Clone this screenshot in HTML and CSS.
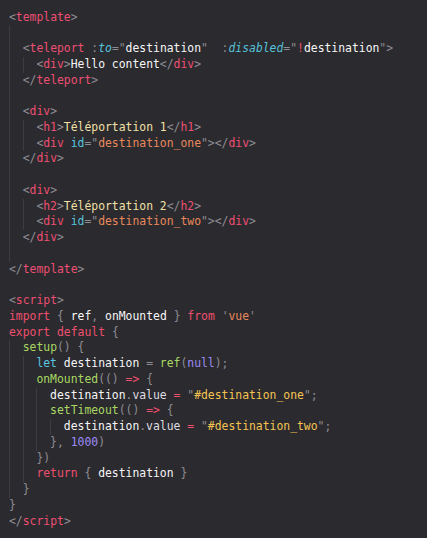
FILE: index.html
```html
<!DOCTYPE html>
<html>
<head>
<meta charset="utf-8">
<link rel="stylesheet" href="styles.css">
</head>
<body>
<div class="editor">
  <div class="l"><span class="p">&lt;</span><span class="t">template</span><span class="p">&gt;</span></div>
  <div class="b">
    <div class="l"> </div>
    <div class="l"><span class="p">&lt;</span><span class="t">teleport</span> <span class="p">:</span><span class="a i">to</span><span class="p">="</span><span class="w">destination</span><span class="p">"</span>  <span class="p">:</span><span class="a i">disabled</span><span class="p">="</span><span class="k">!</span><span class="w">destination</span><span class="p">"&gt;</span></div>
    <div class="b">
      <div class="l"><span class="p">&lt;</span><span class="t">div</span><span class="p">&gt;</span><span class="w">Hello content</span><span class="p">&lt;/</span><span class="t">div</span><span class="p">&gt;</span></div>
    </div>
    <div class="l"><span class="p">&lt;/</span><span class="t">teleport</span><span class="p">&gt;</span></div>
    <div class="l"> </div>
    <div class="l"><span class="p">&lt;</span><span class="t">div</span><span class="p">&gt;</span></div>
    <div class="b">
      <div class="l"><span class="p">&lt;</span><span class="t">h1</span><span class="p">&gt;</span><span class="c">Téléportation 1</span><span class="p">&lt;/</span><span class="t">h1</span><span class="p">&gt;</span></div>
      <div class="l"><span class="p">&lt;</span><span class="t">div</span> <span class="a">id</span><span class="p">="</span><span class="s">destination_one</span><span class="p">"&gt;&lt;/</span><span class="t">div</span><span class="p">&gt;</span></div>
    </div>
    <div class="l"><span class="p">&lt;/</span><span class="t">div</span><span class="p">&gt;</span></div>
    <div class="l"> </div>
    <div class="l"><span class="p">&lt;</span><span class="t">div</span><span class="p">&gt;</span></div>
    <div class="b">
      <div class="l"><span class="p">&lt;</span><span class="t">h2</span><span class="p">&gt;</span><span class="c">Téléportation 2</span><span class="p">&lt;/</span><span class="t">h2</span><span class="p">&gt;</span></div>
      <div class="l"><span class="p">&lt;</span><span class="t">div</span> <span class="a">id</span><span class="p">="</span><span class="s">destination_two</span><span class="p">"&gt;&lt;/</span><span class="t">div</span><span class="p">&gt;</span></div>
    </div>
    <div class="l"><span class="p">&lt;/</span><span class="t">div</span><span class="p">&gt;</span></div>
    <div class="l"> </div>
  </div>
  <div class="l"><span class="p">&lt;/</span><span class="t">template</span><span class="p">&gt;</span></div>
  <div class="l"> </div>
  <div class="l"><span class="p">&lt;</span><span class="t">script</span><span class="p">&gt;</span></div>
  <div class="l"><span class="k">import</span> <span class="p">{</span> <span class="w">ref</span><span class="p">,</span> <span class="w">onMounted</span> <span class="p">}</span> <span class="k">from</span> <span class="p">'</span><span class="s">vue</span><span class="p">'</span></div>
  <div class="l"><span class="k">export default</span> <span class="p">{</span></div>
  <div class="b">
    <div class="l"><span class="f">setup</span><span class="p">() {</span></div>
    <div class="b">
      <div class="l"><span class="kw">let</span> <span class="w">destination</span> <span class="p">=</span> <span class="f">ref</span><span class="p">(</span><span class="n">null</span><span class="p">);</span></div>
      <div class="l"><span class="f">onMounted</span><span class="p">(() </span><span class="k">=&gt;</span> <span class="p">{</span></div>
      <div class="b">
        <div class="l"><span class="w">destination</span><span class="p">.</span><span class="v">value</span> <span class="k">=</span> <span class="p">"</span><span class="y">#destination_one</span><span class="p">";</span></div>
        <div class="l"><span class="f">setTimeout</span><span class="p">(() </span><span class="k">=&gt;</span> <span class="p">{</span></div>
        <div class="b">
          <div class="l"><span class="w">destination</span><span class="p">.</span><span class="v">value</span> <span class="k">=</span> <span class="p">"</span><span class="y">#destination_two</span><span class="p">";</span></div>
        </div>
        <div class="l"><span class="p">}, </span><span class="n">1000</span><span class="p">)</span></div>
      </div>
      <div class="l"><span class="p">})</span></div>
      <div class="l"><span class="k">return</span> <span class="p">{</span> <span class="w">destination</span> <span class="p">}</span></div>
    </div>
    <div class="l"><span class="p">}</span></div>
  </div>
  <div class="l"><span class="p">}</span></div>
  <div class="l"><span class="p">&lt;/</span><span class="t">script</span><span class="p">&gt;</span></div>
</div>
</body>
</html>
```

FILE: styles.css
```css
html, body {
  margin: 0;
  padding: 0;
  background: #2b2a2f;
}
.editor {
  width: 427px;
  height: 538px;
  box-sizing: border-box;
  padding: 9.5px 0 0 9px;
  font-family: "DejaVu Sans Mono", "Liberation Mono", monospace;
  font-size: 11.4px;
  line-height: 15.75px;
  color: #f2f2f2;
  background: #2b2a2f;
  overflow: hidden;
}
.l {
  white-space: pre;
  height: 15.75px;
}
.b {
  border-left: 1px solid #3d3c42;
  padding-left: calc(2ch - 1px);
}
.p { color: #8e8d93; }
.t { color: #ee4f72; }
.a { color: #56c2dc; }
.i { font-style: italic; }
.w { color: #f6f6f6; }
.c { color: #f2e0a6; }
.s { color: #e8895c; }
.y { color: #f4c452; }
.k { color: #f0506e; }
.kw { color: #5bc6e0; }
.f { color: #a9d862; }
.n { color: #9d8bf5; }
.v { color: #dedde2; }
```
